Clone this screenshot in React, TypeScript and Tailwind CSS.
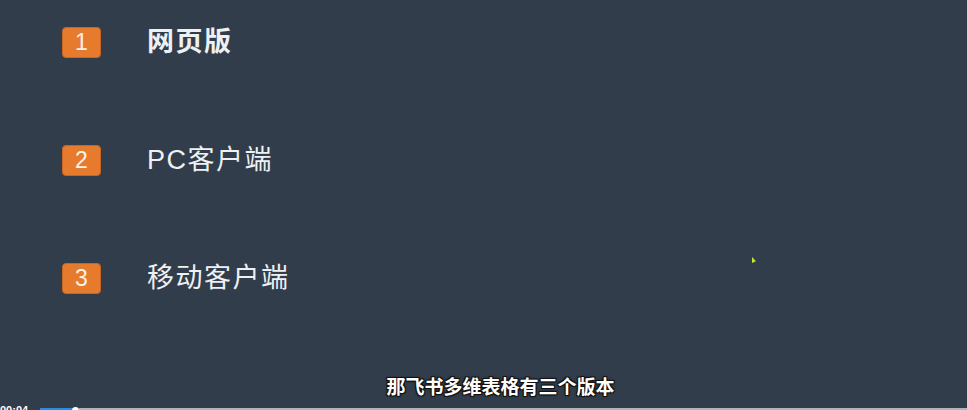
const items = [
  { n: '1', label: '网页版', bold: true },
  { n: '2', label: 'PC客户端', bold: false },
  { n: '3', label: '移动客户端', bold: false },
]

export default function App() {
  return (
    <div
      className="relative flex h-[410px] w-[967px] flex-col overflow-hidden bg-[#323d4b]"
      style={{ fontFamily: '"Liberation Sans", "Noto Sans CJK SC", sans-serif' }}
    >
      <div className="flex flex-1 flex-col gap-[87px] pl-[62px] pt-[27px]">
        {items.map((it) => (
          <div key={it.n} className="flex h-[31px] items-center">
            <div className="flex h-[31px] w-[39px] items-center justify-center rounded-[4px] border border-[#c9651f] bg-[#e77b2d] text-[23px] leading-none text-[#fdf3ea]">
              {it.n}
            </div>
            <span
              className={`ml-[46px] text-[27px] leading-none tracking-[1.5px] text-[#eef1f4] ${it.bold ? 'font-bold' : ''}`}
            >
              {it.label}
            </span>
          </div>
        ))}
      </div>

      {/* subtitle */}
      <div className="flex justify-center pb-[8px] pl-[34px]">
        <span className="text-[19px] font-bold leading-none text-white [text-shadow:-1px_-1px_0_#111,1px_-1px_0_#111,-1px_1px_0_#111,1px_1px_0_#111,0_0_3px_#000]">
          那飞书多维表格有三个版本
        </span>
      </div>

      {/* player controls, cut off at bottom */}
      <div className="flex h-[5px] items-start overflow-hidden">
        <span className="w-[40px] text-[11px] font-bold leading-none text-white">00:04</span>
        <div className="mt-[2px] flex flex-1 items-start">
          <div className="mt-[1px] h-[3px] w-[33px] bg-[#2a8ee0]" />
          <div className="-ml-[1px] h-[7px] w-[7px] rounded-full bg-white" />
          <div className="mt-[1px] h-[3px] flex-1 bg-[#aeb4ba]" />
        </div>
      </div>

      {/* cursor */}
      <div className="absolute left-[752px] top-[257px] h-[6px] w-[4px] bg-[#c9e23a] [clip-path:polygon(0_0,100%_70%,0_100%)]" />
    </div>
  )
}
